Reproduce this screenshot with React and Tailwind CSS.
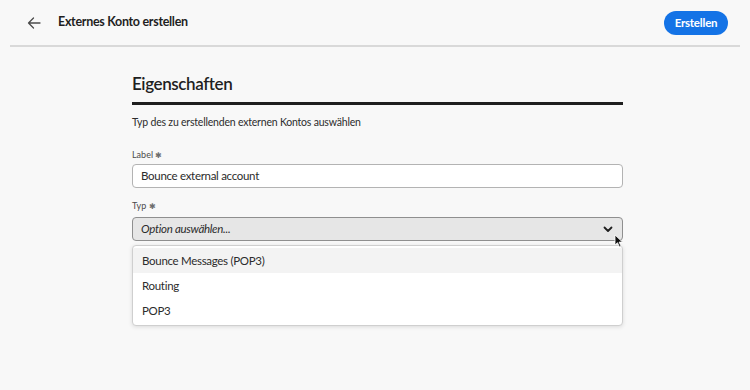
export default function App() {
  const font = { fontFamily: "Lato, 'Noto Sans', sans-serif" };
  return (
    <div className="relative w-[750px] h-[390px] bg-[#f8f8f8] text-[#2c2c2c] overflow-hidden" style={font}>
      {/* Header */}
      <div className="h-[45px] flex items-center pl-[27px] pr-[22px]">
        <svg width="14" height="12" viewBox="0 0 14 12" className="text-[#4b4b4b]">
          <path d="M13 6H1.5M6.5 1L1.5 6l5 5" fill="none" stroke="currentColor" strokeWidth="1.3" strokeLinecap="round" strokeLinejoin="round" />
        </svg>
        <div className="ml-[17px] text-[12.5px] font-bold tracking-[-0.3px] text-[#1f1f1f]">Externes Konto erstellen</div>
        <div className="ml-auto h-[24px] w-[64px] rounded-full bg-[#1473e6] text-white text-[11.5px] font-bold tracking-[-0.2px] flex items-center justify-center">
          Erstellen
        </div>
      </div>
      <div className="mx-[10px] h-[2px] bg-[#d9d9d9]" />

      {/* Content */}
      <div className="flex justify-center pl-[5px]">
        <div className="w-[491px]">
          <div className="mt-[26px] text-[17px] leading-[22px] font-semibold tracking-[-0.4px] text-[#1f1f1f]">Eigenschaften</div>
          <div className="mt-[7px] h-[3px] bg-[#1f1f1f]" />
          <div className="mt-[9px] text-[10.5px] leading-[16px] tracking-[-0.2px] text-[#2c2c2c]">Typ des zu erstellenden externen Kontos auswählen</div>

          <div className="mt-[18px] text-[9px] leading-[14px] text-[#4b4b4b]">
            Label <span className="text-[8px] text-[#6e6e6e]">✱</span>
          </div>
          <div className="mt-[2px] h-[24px] bg-white border border-[#b3b3b3] rounded-[4px] flex items-center pl-[8px] text-[11.5px] tracking-[-0.3px] text-[#2c2c2c]">
            Bounce external account
          </div>

          <div className="mt-[11px] text-[9px] leading-[14px] text-[#4b4b4b]">
            Typ <span className="text-[8px] text-[#6e6e6e]">✱</span>
          </div>
          <div className="mt-[4px] h-[24px] bg-[#e6e6e6] border border-[#8f8f8f] rounded-[4px] flex items-center pl-[8px] pr-[8px] text-[11.5px] tracking-[-0.3px] italic text-[#2c2c2c]">
            <span>Option auswählen...</span>
            <svg width="10" height="7" viewBox="0 0 10 7" className="ml-auto mr-[1px]">
              <path d="M1.5 1.5L5 5l3.5-3.5" fill="none" stroke="#1f1f1f" strokeWidth="1.8" strokeLinecap="round" strokeLinejoin="round" />
            </svg>
          </div>

          <div className="mt-[4px] bg-white border border-[#cfcfcf] rounded-[4px] py-[2px] shadow-[0_1px_4px_rgba(0,0,0,0.12)] text-[11.5px] tracking-[-0.3px] text-[#2c2c2c]">
            <div className="h-[25px] bg-[#f3f3f3] flex items-center pl-[9px]">Bounce Messages (POP3)</div>
            <div className="h-[25px] flex items-center pl-[9px]">Routing</div>
            <div className="h-[25px] flex items-center pl-[9px]">POP3</div>
          </div>
        </div>
      </div>

      {/* Mouse cursor */}
      <svg className="absolute left-[614px] top-[234px]" width="10" height="14" viewBox="0 0 10 14">
        <path d="M1 1v10l2.5-2.3 2 4.3 1.6-.7-2-4.2H8.5z" fill="#111" stroke="#fff" strokeWidth="0.8" strokeLinejoin="round" />
      </svg>
    </div>
  );
}
